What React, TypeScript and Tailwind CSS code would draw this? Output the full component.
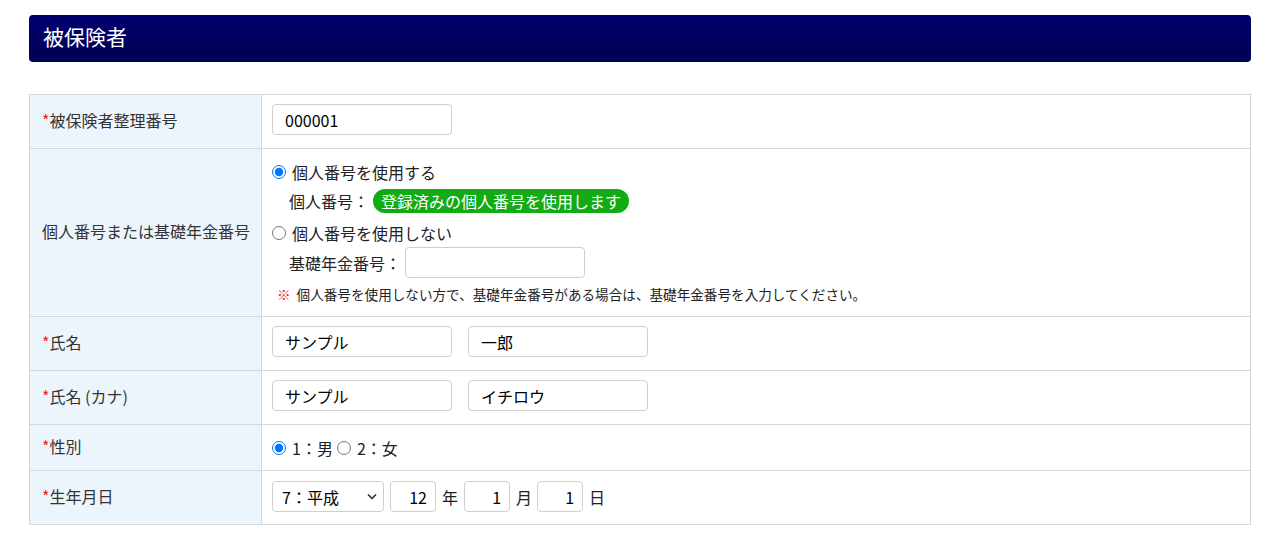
import React from 'react'

const font = { fontFamily: '"Noto Sans CJK JP", "Noto Sans", sans-serif' }

function Req() {
  return <span className="text-[#e8242a]">*</span>
}

function Row({
  label,
  required,
  children,
  first,
  pad = 'py-[11px]',
}: {
  label: string
  required?: boolean
  children: React.ReactNode
  first?: boolean
  pad?: string
}) {
  return (
    <div className={`flex ${first ? '' : 'border-t border-[#d6d6d6]'}`}>
      <div className="w-[232px] shrink-0 bg-[#edf5fc] border-r border-[#d6d6d6] flex items-center pl-3 pb-[4px] text-[16px] text-[#333]">
        {required && <Req />}
        {label}
      </div>
      <div className={`flex-1 px-[10px] ${pad} flex flex-col justify-center`}>{children}</div>
    </div>
  )
}

function TextBox({ value, w = 'w-[180px]', right }: { value?: string; w?: string; right?: boolean }) {
  return (
    <input
      readOnly
      value={value ?? ''}
      className={`${w} h-[31px] border border-[#cfcfcf] rounded-[4px] text-[16px] text-black bg-white ${right ? 'text-right pr-[8px] pl-1' : 'px-3'}`}
    />
  )
}

export default function App() {
  return (
    <div className="min-h-screen bg-white px-[29px] pt-[15px] pb-5" style={font}>
      {/* Section header */}
      <div className="h-[47px] rounded-[4px] bg-gradient-to-b from-[#000070] to-[#000052] flex items-center pl-[14px] pb-[3px]">
        <h2 className="text-white text-[21px]">被保険者</h2>
      </div>

      <div className="mt-8 border border-[#d6d6d6]">
        <Row label="被保険者整理番号" required first pad="pt-[9px] pb-[13px]">
          <TextBox value="000001" />
        </Row>

        <Row label="個人番号または基礎年金番号" pad="pt-[13px] pb-[13px]">
          <div className="flex flex-col text-[16px] text-[#222]">
            <label className="flex items-center gap-[6px] h-[20px]">
              <input type="radio" name="kojin" defaultChecked className="m-0 w-[14px] h-[14px] accent-[#0075ff]" />
              個人番号を使用する
            </label>
            <div className="flex items-center h-[24px] mt-[7px] pl-[17px]">
              <span>個人番号：</span>
              <span className="ml-[4px] bg-[#13ab13] text-white rounded-full px-[8px] h-[24px] flex items-center">
                登録済みの個人番号を使用します
              </span>
            </div>
            <label className="flex items-center gap-[6px] h-[20px] mt-[10px]">
              <input type="radio" name="kojin" className="m-0 w-[14px] h-[14px]" />
              個人番号を使用しない
            </label>
            <div className="flex items-center mt-[4px] pl-[17px]">
              <span>基礎年金番号：</span>
              <span className="ml-[4px]">
                <TextBox />
              </span>
            </div>
            <div className="flex items-center h-[18px] mt-[7px] pl-[5px] text-[13.6px]">
              <span className="text-[#e8242a] font-bold mr-[6px]">※</span>
              個人番号を使用しない方で、基礎年金番号がある場合は、基礎年金番号を入力してください。
            </div>
          </div>
        </Row>

        <Row label="氏名" required pad="pt-[9px] pb-[13px]">
          <div className="flex gap-4">
            <TextBox value="サンプル" />
            <TextBox value="一郎" />
          </div>
        </Row>

        <Row label="氏名 (カナ)" required pad="pt-[9px] pb-[13px]">
          <div className="flex gap-4">
            <TextBox value="サンプル" />
            <TextBox value="イチロウ" />
          </div>
        </Row>

        <Row label="性別" required>
          <div className="flex items-center text-[16px] text-[#222] h-[23px]">
            <input type="radio" name="sex" defaultChecked className="m-0 w-[14px] h-[14px] accent-[#0075ff]" />
            <span className="ml-[6px]">1：男</span>
            <input type="radio" name="sex" className="m-0 ml-[4px] w-[14px] h-[14px]" />
            <span className="ml-[6px]">2：女</span>
          </div>
        </Row>

        <Row label="生年月日" required pad="pt-[10px] pb-[12px]">
          <div className="flex items-center gap-[6px] text-[16px] text-[#222]">
            <div className="relative w-[112px] h-[31px]">
              <select
                defaultValue="7"
                className="appearance-none w-full h-full border border-[#cfcfcf] rounded-[4px] pl-[9px] text-[16px] text-black bg-white"
              >
                <option value="7">7：平成</option>
              </select>
              <svg className="absolute right-[7px] top-[12px] pointer-events-none" width="10" height="7" viewBox="0 0 10 7">
                <path d="M1 1.5 L5 5.5 L9 1.5" fill="none" stroke="#222" strokeWidth="1.5" />
              </svg>
            </div>
            <TextBox value="12" w="w-[46px]" right />
            <span>年</span>
            <TextBox value="1" w="w-[46px]" right />
            <span className="-mr-[1px]">月</span>
            <TextBox value="1" w="w-[46px]" right />
            <span>日</span>
          </div>
        </Row>
      </div>
    </div>
  )
}
